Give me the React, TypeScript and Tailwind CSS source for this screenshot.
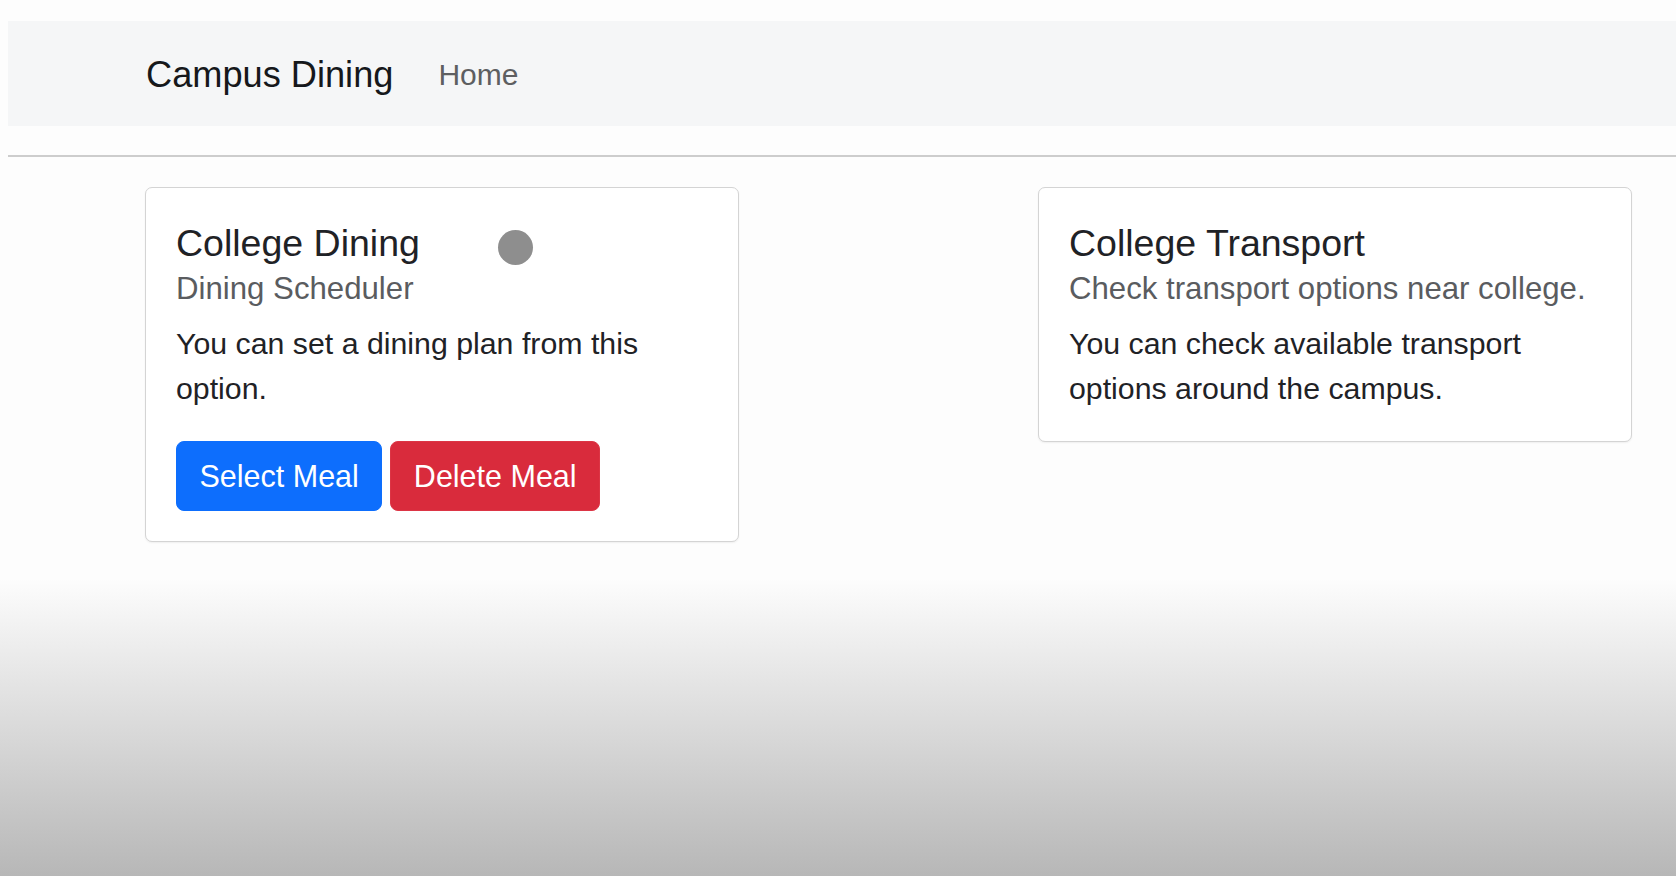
import type { ReactNode } from 'react';

const FONT = "font-['Liberation_Sans',Arial,sans-serif]";

function Card({ title, subtitle, text, children, cursor }: {
  title: string;
  subtitle: string;
  text: ReactNode;
  children?: ReactNode;
  cursor?: boolean;
}) {
  return (
    <div className="relative w-[594px] self-start rounded-[7px] border border-[#d4d4d4] bg-white px-[30px] pb-[30px] pt-[33px] shadow-[0_1px_2px_rgba(0,0,0,0.06)]">
      {cursor && (
        <span className="pointer-events-none absolute left-[352px] top-[42px] h-[35px] w-[35px] rounded-full bg-[#8e8e8e]" />
      )}
      <h5 className="text-[37.5px] leading-[45px] text-[#1f2226]">{title}</h5>
      <h6 className="mt-[5px] text-[31.2px] leading-[36px] text-[#5a5c5f]">{subtitle}</h6>
      <p className="mt-[14px] text-[30.3px] leading-[45px] text-[#1f2226]">{text}</p>
      {children}
    </div>
  );
}

export default function App() {
  return (
    <div
      className={`${FONT} h-screen overflow-hidden bg-[linear-gradient(to_bottom,#fdfdfd_0%,#fdfdfd_66%,#dcdcdc_82%,#b7b7b7_100%)] pl-[8px] pt-[21px]`}
    >
      <nav className="flex h-[105px] items-center bg-[#f5f6f7] pl-[138px]">
        <span className="pt-[3px] text-[36.2px] leading-[56px] text-[#16181b]">Campus Dining</span>
        <a className="ml-[45px] pt-[2px] text-[30px] leading-[45px] text-[#5e5f61]" href="#">
          Home
        </a>
      </nav>

      <hr className="mt-[29px] border-0 border-t-2 border-[#cdcdcd]" />

      <main className="mt-[30px] box-content flex w-[1487px] justify-between pl-[137px]">
        <Card
          cursor
          title="College Dining"
          subtitle="Dining Scheduler"
          text="You can set a dining plan from this option."
        >
          <div className="mt-[30px] flex gap-[8px]">
            <button className="h-[70px] rounded-[8px] border border-[#0d6efd] bg-[#0d6efd] px-[22.5px] text-[30.5px] leading-[45px] text-white">
              Select Meal
            </button>
            <button className="h-[70px] rounded-[8px] border border-[#dc3545] bg-[#d92b3c] px-[22.5px] text-[30.5px] leading-[45px] text-white">
              Delete Meal
            </button>
          </div>
        </Card>

        <Card
          title="College Transport"
          subtitle="Check transport options near college."
          text="You can check available transport options around the campus."
        />
      </main>
    </div>
  );
}
